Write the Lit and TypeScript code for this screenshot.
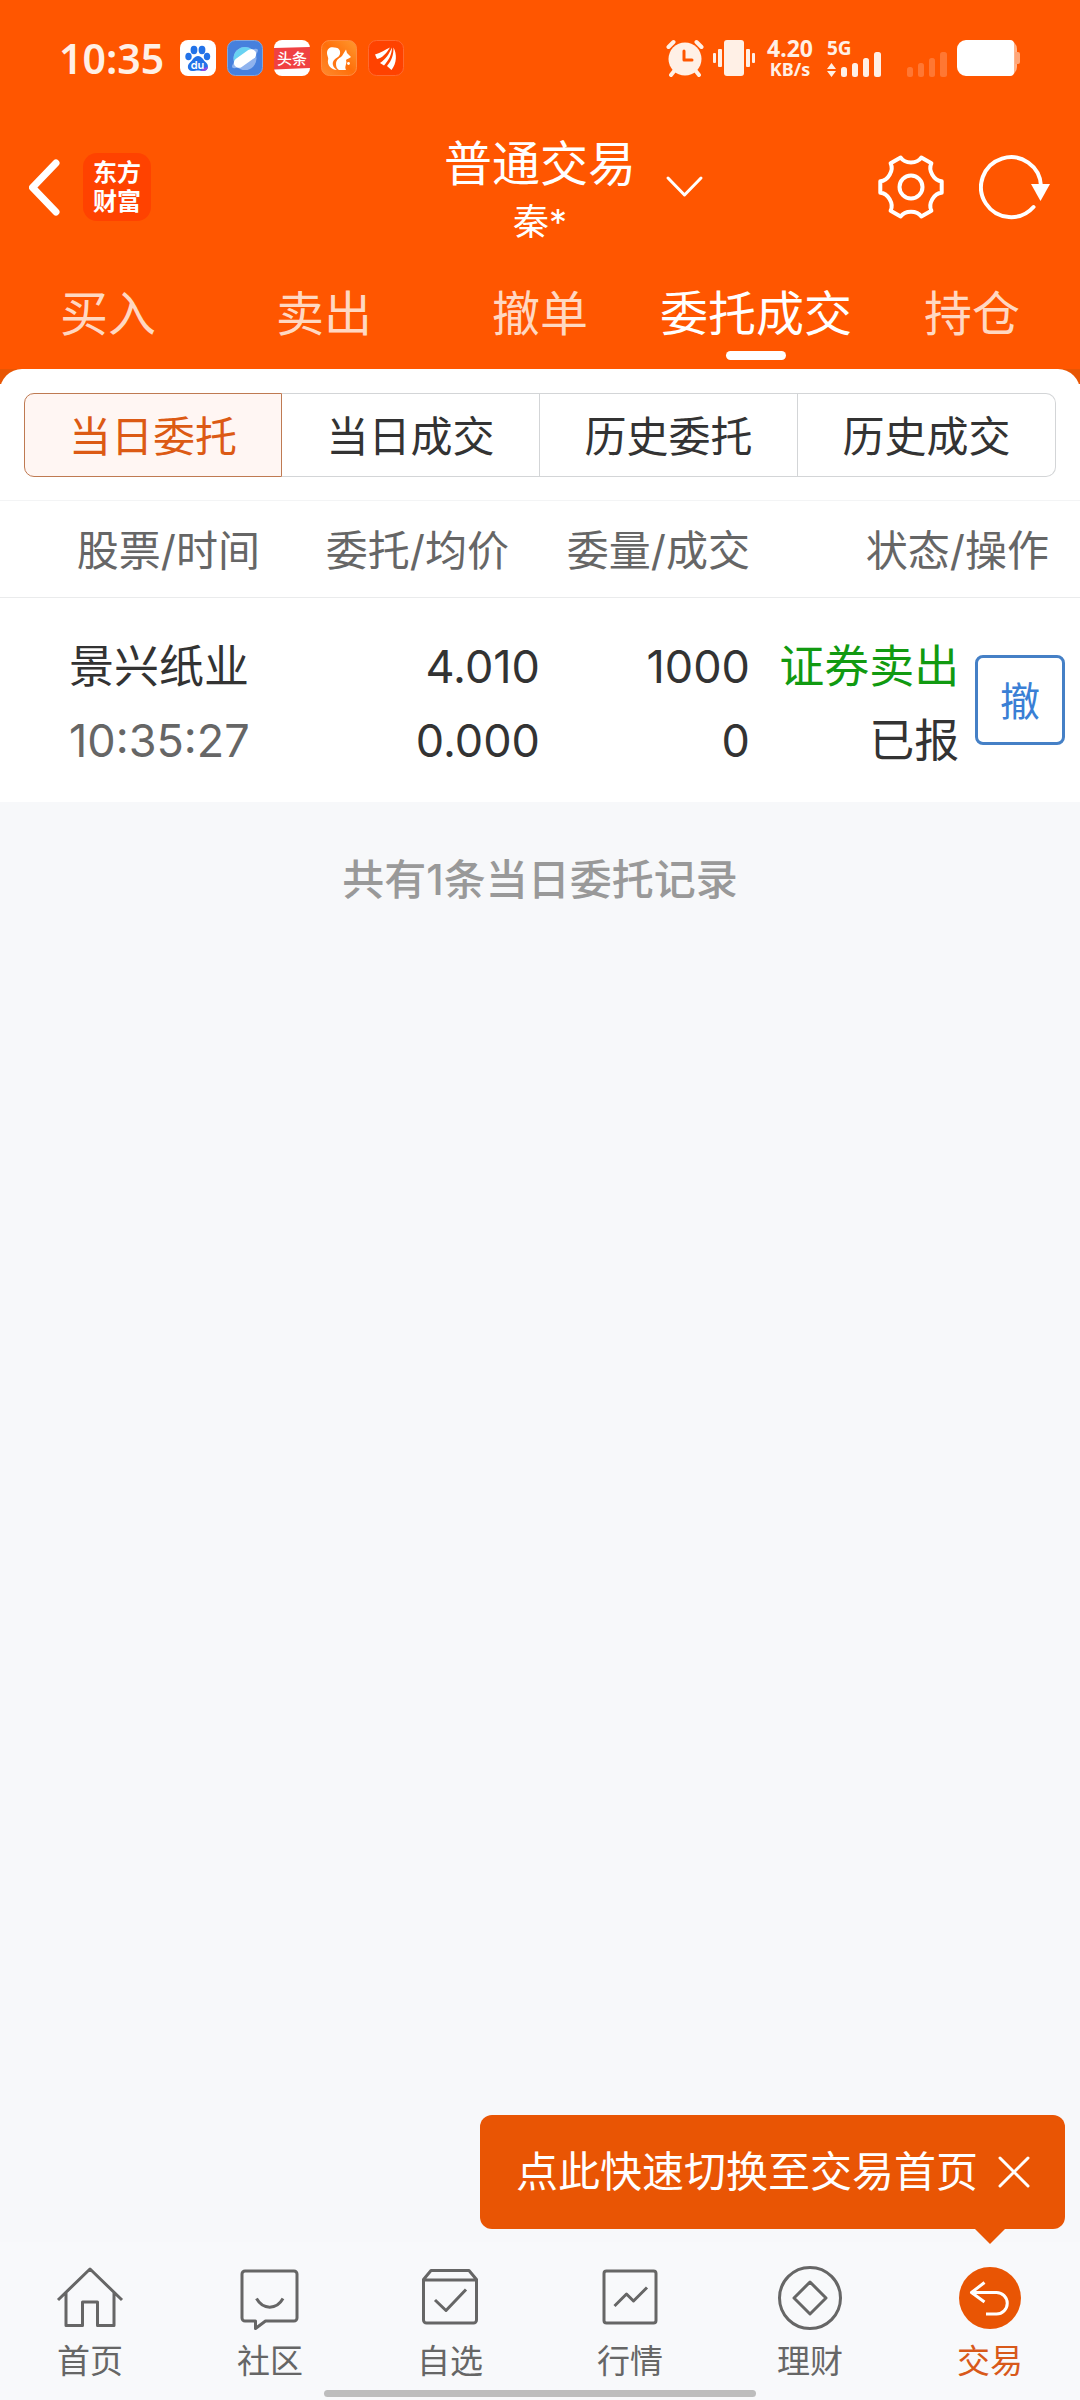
import { LitElement, html, svg, css, type TemplateResult } from "lit";
import { customElement, state } from "lit/decorators.js";
import { classMap } from "lit/directives/class-map.js";

interface Order {
  name: string;
  time: string;
  price: string;
  average: string;
  amount: string;
  filled: string;
  side: string;
  status: string;
}

const TABS = ["买入", "卖出", "撤单", "委托成交", "持仓"];
const SEGMENTS = ["当日委托", "当日成交", "历史委托", "历史成交"];
const ORDERS: Order[] = [
  {
    name: "景兴纸业",
    time: "10:35:27",
    price: "4.010",
    average: "0.000",
    amount: "1000",
    filled: "0",
    side: "证券卖出",
    status: "已报",
  },
];

/* Outline of a six-lobed gear centred on the origin. */
function gearPath(): string {
  const notch = [
    [-10.3, -29.5],
    [-6.2, -23],
    [6.2, -23],
    [10.3, -29.5],
  ];
  let d = "";
  for (let k = 0; k < 6; k++) {
    const a = (k * Math.PI) / 3;
    const p = notch.map(([x, y]) =>
      [x * Math.cos(a) - y * Math.sin(a), x * Math.sin(a) + y * Math.cos(a)].map((v) => v.toFixed(2)).join(" ")
    );
    d += `${k === 0 ? "M" : "L"}${p[0]}C${p[1]} ${p[2]} ${p[3]}`;
  }
  return d + "Z";
}

const NAV: { label: string; icon: TemplateResult; active?: boolean }[] = [
  {
    label: "首页",
    icon: svg`<path d="M2 34 34 3 66 34M10 27v32.500h16.500V36h15v23.500H58V27" />`,
  },
  {
    label: "社区",
    icon: svg`<path d="M9 5h49a3 3 0 0 1 3 3v44a3 3 0 0 1-3 3H29.500l-10 7.500V55H9a3 3 0 0 1-3-3V8a3 3 0 0 1 3-3Z" /><path d="M20.500 32.500c6.500 11.500 20 11.500 26.500 0" />`,
  },
  {
    label: "自选",
    icon: svg`<path d="M7.500 13.500 15 4.500h38l7.500 9V54a3 3 0 0 1-3 3h-47a3 3 0 0 1-3-3ZM7.500 14h53M19 34l11 10.500 20-21" />`,
  },
  {
    label: "行情",
    icon: svg`<rect x="8" y="5" width="52" height="52" rx="2.500" /><path d="m18.500 40 12-12 7 7L51 21.500" />`,
  },
  {
    label: "理财",
    icon: svg`<circle cx="34" cy="32" r="30.500" /><path d="M34 16 50 32 34 48 18 32Z" />`,
  },
  {
    label: "交易",
    active: true,
    icon: svg`<circle class="disc" cx="34" cy="32" r="31" /><path class="arrow" d="M28.500 16.500 15.500 26.500l13 9.500M15.500 26.500h25a10.500 10.500 0 0 1 0 21.500H30" />`,
  },
];

@customElement("app-root")
export class AppRoot extends LitElement {
  static styles = css`
    :host {
      display: block;
      font-family: Inter, "Noto Sans CJK SC", sans-serif;
      color: #333;
    }
    *,
    *::before,
    *::after {
      box-sizing: border-box;
    }
    button {
      margin: 0;
      padding: 0;
      border: 0;
      background: none;
      font: inherit;
      color: inherit;
      cursor: pointer;
    }
    svg {
      display: block;
      flex: none;
    }
    .page {
      min-height: 100vh;
      display: flex;
      flex-direction: column;
      background: #f7f8fa;
    }
    .top {
      background: #ff5600;
      color: #fff;
    }

    .status {
      display: flex;
      justify-content: space-between;
      align-items: center;
      height: 116px;
      padding: 0 59px;
      font-family: "Noto Sans", sans-serif;
      font-weight: 600;
      color: #fff0e6;
    }
    .status-side {
      display: flex;
      align-items: center;
    }
    .clock {
      font-size: 41px;
      line-height: 60px;
      margin-right: 16px;
    }
    .apps {
      display: flex;
      gap: 11px;
    }
    .speed {
      display: flex;
      flex-direction: column;
      text-align: center;
      margin: 0 14px 0 12px;
      font-weight: 700;
    }
    .speed-value {
      font-size: 23px;
      line-height: 22px;
    }
    .speed-unit {
      font-size: 18px;
      line-height: 20px;
    }
    .vibrate {
      margin-left: 9px;
    }
    .battery {
      margin-left: 9px;
    }

    .bar {
      display: grid;
      grid-template-columns: 1fr auto 1fr;
      align-items: center;
      height: 142px;
      padding: 0 29px;
    }
    .bar-left {
      display: flex;
      align-items: center;
      gap: 21px;
    }
    .logo {
      display: flex;
      flex-direction: column;
      align-items: center;
      justify-content: center;
      width: 68px;
      height: 68px;
      border-radius: 14px;
      background: #ff4200;
      font-size: 24px;
      line-height: 29px;
      font-weight: 700;
      text-decoration: none;
      color: #fff;
    }
    .heading {
      padding-top: 12px;
      text-align: center;
    }
    .title {
      margin: 0;
      font-size: 48px;
      line-height: 58px;
      font-weight: 400;
    }
    .account {
      margin: 0;
      font-size: 36px;
      line-height: 58px;
    }
    .bar-right {
      display: flex;
      align-items: center;
      gap: 34px;
    }
    .expand {
      margin: 0 auto 0 28px;
    }

    .tabs {
      display: grid;
      grid-template-columns: repeat(5, 1fr);
      height: 111px;
    }
    .tab {
      position: relative;
      font-size: 48px;
      line-height: 72px;
      white-space: nowrap;
      color: #ffd8c2;
    }
    .tab-active {
      color: #fff;
    }
    .tab-active::after {
      content: "";
      position: absolute;
      left: 50%;
      bottom: 9px;
      width: 60px;
      height: 9px;
      margin-left: -30px;
      border-radius: 5px;
      background: #fff;
    }

    .sheet {
      background: linear-gradient(#e85604 15px, #fff 15px);
    }
    .card {
      padding-top: 24px;
      border-radius: 22px 22px 0 0;
      background: #fff;
    }
    .segments {
      display: grid;
      grid-template-columns: repeat(4, 1fr);
      margin: 0 24px 23px;
    }
    .segment {
      height: 84px;
      padding-top: 4px;
      border: 1px solid #d3d5d7;
      border-left-width: 0;
      font-size: 42px;
      line-height: 60px;
      white-space: nowrap;
    }
    .segment:first-child {
      border-left-width: 1px;
      border-radius: 10px 0 0 10px;
    }
    .segment:last-child {
      border-radius: 0 10px 10px 0;
    }
    .segment-active {
      border-color: #bf7a52;
      background: #fff6f3;
      color: #dc5a14;
    }

    .orders {
      width: 100%;
      table-layout: fixed;
      border-collapse: collapse;
      border-top: 1px solid #f3f4f5;
    }
    .col-name,
    .col-price {
      width: 25%;
    }
    .col-amount {
      width: 20%;
    }
    .col-status {
      width: 19%;
    }
    .col-action {
      width: 11%;
    }
    th {
      height: 97px;
      padding: 4px 0 0;
      border-bottom: 1px solid #eaebec;
      font-size: 42px;
      line-height: 60px;
      font-weight: 400;
      color: #666;
      text-align: right;
      white-space: nowrap;
    }
    .th-name {
      padding-right: 10px;
    }
    .th-price {
      padding-right: 31px;
    }
    .th-status {
      padding-right: 31px;
    }
    td {
      height: 204px;
      padding: 32px 0 24px;
      font-size: 45px;
      line-height: 74px;
      text-align: right;
      white-space: nowrap;
    }
    .td-name {
      padding-left: 69px;
      text-align: left;
    }
    .td-amount,
    .th-amount {
      padding-right: 6px;
    }
    .td-status {
      padding-right: 2px;
    }
    .td-action {
      padding: 0 15px 0 0;
    }
    .line {
      display: block;
    }
    .muted {
      color: #666;
    }
    .sell {
      color: #119a11;
    }
    .cancel {
      width: 90px;
      height: 90px;
      padding-top: 4px;
      border: 3px solid #4580c6;
      border-radius: 8px;
      font-size: 40px;
      line-height: 60px;
      color: #3a7fd5;
      vertical-align: middle;
    }
    .count {
      margin: 0;
      padding: 48px 24px;
      font-size: 42px;
      line-height: 60px;
      font-weight: 500;
      text-align: center;
      color: #999;
    }

    .nav {
      position: relative;
      margin-top: auto;
      height: 158px;
      padding-top: 24px;
      background: #f8f9fb;
    }
    .nav-items {
      display: grid;
      grid-template-columns: repeat(6, 1fr);
    }
    .nav-item {
      display: flex;
      flex-direction: column;
      align-items: center;
      font-size: 33px;
      line-height: 50px;
      text-decoration: none;
      color: #666;
    }
    .nav-icon {
      width: 68px;
      height: 70px;
      fill: none;
      stroke: #666;
      stroke-width: 3;
      stroke-linejoin: round;
    }
    .nav-active {
      color: #d8591a;
    }
    .disc {
      fill: #e95504;
      stroke: none;
    }
    .arrow {
      stroke: #fff;
    }
    .home-bar {
      position: absolute;
      left: 30%;
      right: 30%;
      bottom: 3px;
      height: 7px;
      border-radius: 4px;
      background: #bdbdbd;
    }
    .tip {
      position: absolute;
      right: 15px;
      bottom: 171px;
      display: flex;
      align-items: center;
      gap: 19px;
      height: 114px;
      padding: 0 34px 0 36px;
      border-radius: 12px;
      background: #e95504;
      color: #fff;
      font-size: 42px;
      line-height: 60px;
      white-space: nowrap;
    }
    .tip::after {
      content: "";
      position: absolute;
      right: 60px;
      top: 100%;
      border: 15px solid transparent;
      border-top-color: #e95504;
      border-bottom-width: 0;
    }
  `;

  @state() private tab = 3;
  @state() private segment = 0;
  @state() private tipOpen = true;

  private renderApps() {
    return html`
      <div class="apps">
        <svg width="36" height="36" viewBox="0 0 36 36" aria-hidden="true">
          <rect width="36" height="36" rx="8" fill="#fff" />
          <g fill="#2272e8">
            <ellipse cx="14" cy="10" rx="3.400" ry="4.200" />
            <ellipse cx="22" cy="10" rx="3.400" ry="4.200" />
            <ellipse cx="8.500" cy="16.500" rx="3.200" ry="3.800" />
            <ellipse cx="27" cy="16.500" rx="3.200" ry="3.800" />
            <path d="M18 16c4 0 5 4 8 6.500 3.500 3 2 8.500-2.500 8.500-3 0-3.500-.600-5.500-.600s-3 .600-6 .600c-4.500 0-5.500-5.500-2-8.500C13 20 14 16 18 16Z" />
          </g>
          <path d="M21 31c3 0 7 0 6.800-4.500L22 29Z" fill="#8a4be8" />
          <text x="17.500" y="28.500" font-family="Inter" font-size="11" font-weight="600" fill="#fff" text-anchor="middle">du</text>
        </svg>
        <svg width="36" height="36" viewBox="0 0 36 36" aria-hidden="true">
          <rect x="0.500" y="0.500" width="35" height="35" rx="8" fill="#4680dd" stroke="#86a5d8" />
          <circle cx="18" cy="18.500" r="11.500" fill="#8fb3ee" />
          <path d="M7 22A11.500 11.500 0 0 1 25 9.500Z" fill="#68d2f2" />
          <ellipse cx="18" cy="18.500" rx="15.500" ry="4.500" transform="rotate(-35 18 18.500)" fill="#8fb3ee" />
          <rect x="5.500" y="13.500" width="25" height="10" rx="5" transform="rotate(-35 18 18.500)" fill="#fff" />
        </svg>
        <svg width="36" height="36" viewBox="0 0 36 36" aria-hidden="true">
          <rect width="36" height="36" rx="8" fill="#fff" />
          <path d="m0 8 36-1v21L0 29.500Z" fill="#f04142" />
          <text x="18" y="24" font-family="Noto Sans CJK SC" font-size="15" font-weight="500" fill="#fff" text-anchor="middle">头条</text>
        </svg>
        <svg width="36" height="36" viewBox="0 0 36 36" aria-hidden="true">
          <defs>
            <linearGradient id="uc" x1="0" y1="1" x2="1" y2="0">
              <stop offset="0" stop-color="#ff8a2e" />
              <stop offset="0.500" stop-color="#ff6f0a" />
              <stop offset="1" stop-color="#ff9a30" />
            </linearGradient>
          </defs>
          <rect x="0.500" y="0.500" width="35" height="35" rx="8" fill="url(#uc)" stroke="#ff8c40" />
          <path d="M6 13C6 8 10 6.500 13 7.500 17 7 20 10 19 14 18 18 13 18 12 22 11 25 13 28 16 30 10 29.500 6 25 7 20 8 18 6 16 6 13Z" fill="#fff" />
          <path d="M15 24C15 19 19 18 21 16L25 9.500 26 13 30 17C28 19 26 18.500 25 20 26.500 24 23 26 25 30H18C16 29 15 27 15 24Z" fill="#fff" />
          <circle cx="27.500" cy="23.500" r="1.400" fill="#fff" />
        </svg>
        <svg width="36" height="36" viewBox="0 0 36 36" aria-hidden="true">
          <rect x="0.500" y="0.500" width="35" height="35" rx="8" fill="#ff4200" stroke="#ff6a30" />
          <path d="M7 14.500C13 12.500 17 10 22 7.500 18 14 14 18 9 19ZM12 23C18 19 21 14 24 7.500 24 15 20 21 16 25.500ZM19 26C24 20 25.500 15 25.500 7.500 29 14 29 23 23.500 30Z" fill="#fff" />
        </svg>
      </div>
    `;
  }

  private renderStatus() {
    return html`
      <div class="status">
        <div class="status-side">
          <span class="clock">10:35</span>
          ${this.renderApps()}
        </div>
        <div class="status-side">
          <svg width="38" height="38" viewBox="0 0 38 38" aria-hidden="true">
            <g fill="none" stroke="#fff0e6" stroke-width="4" stroke-linecap="round">
              <path d="m2.500 8 5-5M35.500 8l-5-5M5 36l4-5M33 36l-4-5" />
            </g>
            <circle cx="19" cy="20" r="16.500" fill="#fff0e6" />
            <path d="M18 12v9h8" fill="none" stroke="#ff5600" stroke-width="3" stroke-linecap="round" stroke-linejoin="round" />
          </svg>
          <svg class="vibrate" width="42" height="36" viewBox="0 0 42 36" fill="#fff0e6" aria-hidden="true">
            <rect x="11" width="20" height="36" rx="3" />
            <rect x="5" y="9" width="4" height="18" rx="1" />
            <rect x="33" y="9" width="4" height="18" rx="1" />
            <rect y="13" width="3" height="10" rx="1" />
            <rect x="39" y="13" width="3" height="10" rx="1" />
          </svg>
          <span class="speed"><span class="speed-value">4.20</span><span class="speed-unit">KB/s</span></span>
          <svg width="56" height="58" viewBox="0 -10 56 58" fill="#fff0e6" aria-label="5G">
            <text x="0" y="16" font-size="19" font-weight="700">5G</text>
            <path d="m0 30 4.500-6 4.500 6ZM0 32l4.500 6L9 32Z" />
            <rect x="14" y="28" width="6" height="10" rx="2.500" />
            <rect x="25" y="24" width="6" height="14" rx="2.500" />
            <rect x="36" y="19" width="6" height="19" rx="2.500" />
            <rect x="47" y="13" width="7" height="25" rx="2.500" />
          </svg>
          <svg width="65" height="38" viewBox="-10 0 65 38" fill="#ff7733" aria-hidden="true">
            <rect x="14" y="28" width="6" height="10" rx="2.500" />
            <rect x="25" y="24" width="6" height="14" rx="2.500" />
            <rect x="36" y="19" width="6" height="19" rx="2.500" />
            <rect x="47" y="13" width="7" height="25" rx="2.500" />
          </svg>
          <svg class="battery" width="64" height="36" viewBox="0 0 64 36" aria-hidden="true">
            <rect x="10" width="50" height="36" rx="9" fill="#ffb48c" />
            <path d="M58 12h3a2 2 0 0 1 2 2v8a2 2 0 0 1-2 2h-3Z" fill="#ffa678" />
            <path d="M9 0h44a4 4 0 0 1 4 4v28a4 4 0 0 1-4 4H9a9 9 0 0 1-9-9V9a9 9 0 0 1 9-9Z" fill="#fff" />
          </svg>
        </div>
      </div>
    `;
  }

  private renderBar() {
    return html`
      <div class="bar">
        <div class="bar-left">
          <button aria-label="返回">
            <svg width="33" height="60" viewBox="3 0 33 60" fill="none" stroke="#fff" stroke-width="7" stroke-linecap="round" stroke-linejoin="round">
              <path d="M30 6 6.500 30.500 30 55" />
            </svg>
          </button>
          <a class="logo" href="#"><span>东方</span><span>财富</span></a>
        </div>
        <div class="heading">
          <h1 class="title">普通交易</h1>
          <p class="account">秦*</p>
        </div>
        <div class="bar-right">
          <button class="expand" aria-label="切换账户">
            <svg width="40" height="24" viewBox="0 0 40 24" fill="none" stroke="#fff" stroke-width="3" stroke-linecap="round" stroke-linejoin="round">
              <path d="m4 3 16.500 17L37 3" />
            </svg>
          </button>
          <button aria-label="设置">
            <svg width="68" height="68" viewBox="-34 -34 68 68" fill="none" stroke="#fff" stroke-width="4" stroke-linejoin="round">
              <path d=${gearPath()} />
              <circle r="11.500" />
            </svg>
          </button>
          <button aria-label="刷新">
            <svg width="72" height="68" viewBox="0 0 72 68" fill="none" stroke="#fff" stroke-width="4">
              <path d="M62 33A30 30 0 1 0 54.500 54" stroke-linecap="round" />
              <path d="M52 31h19l-9.500 17Z" fill="#fff" stroke="none" />
            </svg>
          </button>
        </div>
      </div>
    `;
  }

  private renderOrder(o: Order) {
    return html`
      <tr>
        <td class="td-name"><span class="line">${o.name}</span><span class="line muted">${o.time}</span></td>
        <td><span class="line">${o.price}</span><span class="line">${o.average}</span></td>
        <td class="td-amount"><span class="line">${o.amount}</span><span class="line">${o.filled}</span></td>
        <td class="td-status"><span class="line sell">${o.side}</span><span class="line">${o.status}</span></td>
        <td class="td-action"><button class="cancel">撤</button></td>
      </tr>
    `;
  }

  render() {
    return html`
      <div class="page">
        <header class="top">
          ${this.renderStatus()} ${this.renderBar()}
          <nav class="tabs">
            ${TABS.map(
              (t, i) => html`<button class=${classMap({ tab: true, "tab-active": i === this.tab })} @click=${() => (this.tab = i)}>${t}</button>`
            )}
          </nav>
        </header>
        <main>
          <div class="sheet">
            <section class="card">
              <div class="segments">
                ${SEGMENTS.map(
                  (s, i) => html`<button
                    class=${classMap({ segment: true, "segment-active": i === this.segment })}
                    aria-pressed=${i === this.segment}
                    @click=${() => (this.segment = i)}
                  >${s}</button>`
                )}
              </div>
              <table class="orders">
                <colgroup>
                  <col class="col-name" />
                  <col class="col-price" />
                  <col class="col-amount" />
                  <col class="col-status" />
                  <col class="col-action" />
                </colgroup>
                <thead>
                  <tr>
                    <th class="th-name">股票/时间</th>
                    <th class="th-price">委托/均价</th>
                    <th class="th-amount">委量/成交</th>
                    <th class="th-status" colspan="2">状态/操作</th>
                  </tr>
                </thead>
                <tbody>
                  ${ORDERS.map((o) => this.renderOrder(o))}
                </tbody>
              </table>
            </section>
          </div>
          <p class="count">共有${ORDERS.length}条当日委托记录</p>
        </main>
        <footer class="nav">
          ${this.tipOpen
            ? html`<div class="tip">
                <span>点此快速切换至交易首页</span>
                <button aria-label="关闭" @click=${() => (this.tipOpen = false)}>
                  <svg width="34" height="34" viewBox="0 0 34 34" fill="none" stroke="#fff" stroke-width="3" stroke-linecap="round">
                    <path d="m3 3 28 28M31 3 3 31" />
                  </svg>
                </button>
              </div>`
            : null}
          <nav class="nav-items">
            ${NAV.map(
              (n) => html`<a class=${classMap({ "nav-item": true, "nav-active": !!n.active })} href="#">
                <svg class="nav-icon" viewBox="0 0 68 70" aria-hidden="true">${n.icon}</svg>
                <span>${n.label}</span>
              </a>`
            )}
          </nav>
          <div class="home-bar"></div>
        </footer>
      </div>
    `;
  }
}
